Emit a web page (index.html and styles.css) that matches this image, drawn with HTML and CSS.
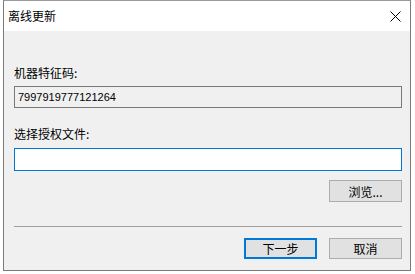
FILE: index.html
```html
<!DOCTYPE html>
<html lang="zh-CN">
<head>
    <meta charset="UTF-8">
    <title>离线更新</title>
    <link rel="stylesheet" href="styles.css">
</head>
<body>
    <div class="window">
        <div class="titlebar">
            <span class="title">离线更新</span>
            <span class="close">
                <svg width="11" height="11" viewBox="0 0 11 11"><path d="M0.5 0.5L10.5 10.5M10.5 0.5L0.5 10.5" stroke="#000" stroke-width="1"/></svg>
            </span>
        </div>
        <div class="content">
            <label class="label first">机器特征码:</label>
            <div class="field readonly">7997919777121264</div>

            <label class="label second">选择授权文件:</label>
            <div class="field active"></div>

            <div class="row browse-row">
                <button class="btn">浏览...</button>
            </div>

            <div class="separator"></div>

            <div class="row actions">
                <button class="btn primary">下一步</button>
                <button class="btn">取消</button>
            </div>
        </div>
    </div>
</body>
</html>
```

FILE: styles.css
```css
/* базовые */
* { margin: 0; padding: 0; box-sizing: border-box; }
body { background: #ffffff; font-family: "Noto Sans CJK SC", "Liberation Sans", sans-serif; font-size: 12px; color: #000; }

/* окно */
.window {
    margin-left: 3px;
    width: 408px;
    height: 271px;
    border: 1px solid #7a7a7a;
    border-top-color: #9a9a9a;
    background: #f0f0f0;
    display: flex;
    flex-direction: column;
}

.titlebar {
    height: 30px;
    background: #ffffff;
    display: flex;
    align-items: center;
    justify-content: space-between;
    padding: 0 9px 0 4px;
}
.title { font-size: 12px; line-height: 16px; }
.close { display: flex; width: 11px; height: 11px; margin-right: 0; }

.content {
    flex: 1;
    display: flex;
    flex-direction: column;
    padding: 0 8px 0 10px;
}

.label { display: block; line-height: 16px; height: 16px; }
.label.first { margin-top: 34px; }
.label.second { margin-top: 18px; }

.field {
    margin-top: 5px;
    height: 22px;
    border: 1px solid #7a7a7a;
    font-family: "Liberation Sans", sans-serif;
    font-size: 11px;
    line-height: 20px;
    padding-left: 3px;
}
.field.readonly { background: #f0f0f0; }
.field.active { margin-top: 6px; height: 23px; background: #ffffff; border-color: #0078d7; }

.row { display: flex; justify-content: flex-end; gap: 12px; }
.browse-row { margin-top: 9px; }
.actions { margin-top: 11px; }

.btn {
    width: 73px;
    height: 22px;
    background: #e1e1e1;
    border: 1px solid #adadad;
    font-family: inherit;
    font-size: 12px;
    color: #000;
}
.actions .btn { height: 21px; }
.btn.primary { border: 2px solid #0078d7; }

.separator { margin-top: 24px; height: 1px; background: #a0a0a0; }
```
